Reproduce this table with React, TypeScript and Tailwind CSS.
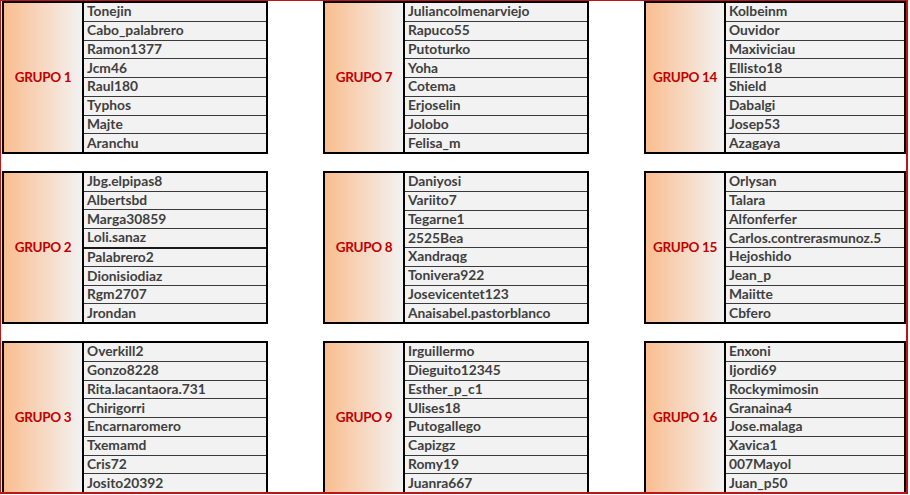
const columns: { grupo: number; names: string[]; thickAfter?: number }[][] = [
  [
    { grupo: 1, names: ['Tonejin', 'Cabo_palabrero', 'Ramon1377', 'Jcm46', 'Raul180', 'Typhos', 'Majte', 'Aranchu'] },
    { grupo: 2, names: ['Jbg.elpipas8', 'Albertsbd', 'Marga30859', 'Loli.sanaz', 'Palabrero2', 'Dionisiodiaz', 'Rgm2707', 'Jrondan'], thickAfter: 3 },
    { grupo: 3, names: ['Overkill2', 'Gonzo8228', 'Rita.lacantaora.731', 'Chirigorri', 'Encarnaromero', 'Txemamd', 'Cris72', 'Josito20392'] },
  ],
  [
    { grupo: 7, names: ['Juliancolmenarviejo', 'Rapuco55', 'Putoturko', 'Yoha', 'Cotema', 'Erjoselin', 'Jolobo', 'Felisa_m'] },
    { grupo: 8, names: ['Daniyosi', 'Variito7', 'Tegarne1', '2525Bea', 'Xandraqg', 'Tonivera922', 'Josevicentet123', 'Anaisabel.pastorblanco'] },
    { grupo: 9, names: ['Irguillermo', 'Dieguito12345', 'Esther_p_c1', 'Ulises18', 'Putogallego', 'Capizgz', 'Romy19', 'Juanra667'] },
  ],
  [
    { grupo: 14, names: ['Kolbeinm', 'Ouvidor', 'Maxiviciau', 'Ellisto18', 'Shield', 'Dabalgi', 'Josep53', 'Azagaya'] },
    { grupo: 15, names: ['Orlysan', 'Talara', 'Alfonferfer', 'Carlos.contrerasmunoz.5', 'Hejoshido', 'Jean_p', 'Maiitte', 'Cbfero'] },
    { grupo: 16, names: ['Enxoni', 'Ijordi69', 'Rockymimosin', 'Granaina4', 'Jose.malaga', 'Xavica1', '007Mayol', 'Juan_p50'] },
  ],
]

function GroupTable({ grupo, names, thickAfter }: { grupo: number; names: string[]; thickAfter?: number }) {
  return (
    <div className="flex h-[153px] border-2 border-black">
      {/* Label cell */}
      <div className="w-[80px] border-r-2 border-black bg-linear-to-r from-[#f9bd8f] to-[#f2f2f2] flex items-center justify-center">
        <span className="text-[13.5px] font-bold text-[#c00000] tracking-[-0.3px]">GRUPO {grupo}</span>
      </div>
      {/* Names */}
      <div className="flex-1 flex flex-col bg-[#f2f2f2]">
        {names.map((name, i) => (
          <div
            key={name}
            className={
              'flex-1 flex items-center pl-[3px] pb-[1px] text-[13.8px] font-bold text-[#3f3f3f] leading-none ' +
              (i === 0 ? '' : i === (thickAfter ?? -1) + 1 ? 'border-t-2 border-[#1a1a1a]' : 'border-t border-[#3a3a3a]')
            }
          >
            {name}
          </div>
        ))}
      </div>
    </div>
  )
}

export default function App() {
  return (
    <div className="w-[910px] h-[495px] bg-white" style={{ fontFamily: 'Lato, "Open Sans", sans-serif' }}>
      {/* Red frame */}
      <div className="w-[908px] h-[494px] border-l border-t border-r-2 border-b-2 border-[#c0141c] overflow-hidden">
        <div className="pl-[1px] grid grid-cols-[266px_266px_262px] gap-x-[55px]">
          {columns.map((col, c) => (
            <div key={c} className="flex flex-col gap-y-[17px]">
              {col.map(g => (
                <GroupTable key={g.grupo} {...g} />
              ))}
            </div>
          ))}
        </div>
      </div>
    </div>
  )
}
